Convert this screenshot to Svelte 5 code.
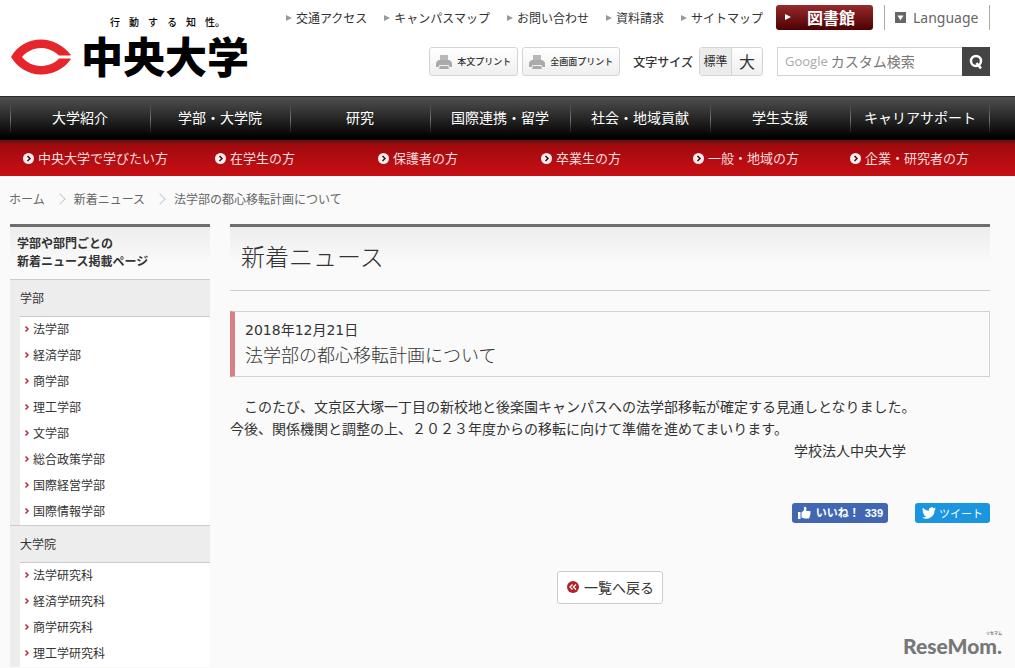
<script>
	const utilityLinks = [
		"交通アクセス",
		"キャンパスマップ",
		"お問い合わせ",
		"資料請求",
		"サイトマップ",
	];
	const mainNav = [
		"大学紹介",
		"学部・大学院",
		"研究",
		"国際連携・留学",
		"社会・地域貢献",
		"学生支援",
		"キャリアサポート",
	];
	const visitorNav = [
		"中央大学で学びたい方",
		"在学生の方",
		"保護者の方",
		"卒業生の方",
		"一般・地域の方",
		"企業・研究者の方",
	];
	const sideSections = [
		{
			title: "学部",
			items: [
				"法学部",
				"経済学部",
				"商学部",
				"理工学部",
				"文学部",
				"総合政策学部",
				"国際経営学部",
				"国際情報学部",
			],
		},
		{
			title: "大学院",
			items: ["法学研究科", "経済学研究科", "商学研究科", "理工学研究科"],
		},
	];
	let query = $state("");
	let size = $state("標準");
</script>

{#snippet printer()}
	<svg class="printer" viewBox="0 0 16 16" width="16" height="16" aria-hidden="true">
		<path d="M4 1h8v5H4z" fill="#b8b8b8" />
		<path d="M3 6h10q3 1 3 4v3H0v-3q0-3 3-4z" fill="#aaa" />
		<path d="M3.500 11.500h9l1 4h-11z" fill="#aaa" stroke="#f2f2f2" />
	</svg>
{/snippet}

<div class="page">
	<header>
		<a class="brand" href="#top">
			<svg class="mark" viewBox="0 0 60 36" width="60" height="36" aria-hidden="true">
				<path
					fill="#e5262d"
					d="M60 16C52 6 41 .5 30 .5 17 .5 6 7.500 0 18c6 10 17 17.500 30 17.500 12 0 23-5.500 30-15.500l-1-.5H48C43 25 36 27 30 27c-8 0-15-4-19-9 4-5 11-9 19-9 6 0 13 2.500 18 7.500h11z"
				/>
			</svg>
			<span class="brand-text">
				<span class="tagline">
					{#each ["行", "動", "す", "る", "知", "性。"] as c}<span>{c}</span>{/each}
				</span>
				<span class="brand-name">中央大学</span>
			</span>
		</a>
		<div class="tools">
			<div class="row">
				<ul class="utility">
					{#each utilityLinks as link}
						<li><a href="#link">{link}</a></li>
					{/each}
				</ul>
				<a class="library" href="#library">図書館</a>
				<button class="language" type="button">
					<svg viewBox="0 0 11 11" width="11" height="11" aria-hidden="true">
						<path d="M0 0h11v11H0z" fill="#666" />
						<path d="M2.500 3.500h6L5.500 8.500z" fill="#fff" />
					</svg>
					Language
				</button>
			</div>
			<div class="row second">
				<button class="print" type="button">{@render printer()}本文プリント</button>
				<button class="print" type="button">{@render printer()}全画面プリント</button>
				<span class="size-label">文字サイズ</span>
				<div class="sizes">
					<button type="button" class:active={size === "標準"} onclick={() => (size = "標準")}>標準</button>
					<button type="button" class="big" class:active={size === "大"} onclick={() => (size = "大")}>大</button>
				</div>
				<form class="search">
					<label for="q">Google</label>
					<input id="q" type="text" placeholder="カスタム検索" bind:value={query} />
					<button type="button" aria-label="検索">
						<svg viewBox="0 0 16 16" width="16" height="16" aria-hidden="true">
							<circle cx="8" cy="7" r="5" fill="none" stroke="#fff" stroke-width="2.500" />
							<path d="M8.500 9l4.500 5.500" stroke="#fff" stroke-width="2.500" />
						</svg>
					</button>
				</form>
			</div>
		</div>
	</header>

	<nav class="main-nav">
		<ul>
			{#each mainNav as item}
				<li><a href="#nav">{item}</a></li>
			{/each}
		</ul>
	</nav>
	<nav class="visitor-nav">
		<ul>
			{#each visitorNav as item}
				<li>
					<a href="#visitor">
						<svg viewBox="0 0 11 11" width="11" height="11" aria-hidden="true">
							<circle cx="5.500" cy="5.500" r="5.500" fill="#ffecec" />
							<path d="M4.500 3l2.500 2.500L4.500 8" fill="none" stroke="#4a0c0e" stroke-width="1.500" />
						</svg>
						{item}
					</a>
				</li>
			{/each}
		</ul>
	</nav>

	<ol class="crumbs">
		<li><a href="#home">ホーム</a></li>
		<li><a href="#news">新着ニュース</a></li>
		<li>法学部の都心移転計画について</li>
	</ol>

	<div class="columns">
		<aside>
			<h2>学部や部門ごとの<br />新着ニュース掲載ページ</h2>
			{#each sideSections as section}
				<section>
					<h3>{section.title}</h3>
					<ul>
						{#each section.items as item}
							<li>
								<a href="#dept">
									<svg viewBox="0 0 4 6" width="4" height="6" aria-hidden="true">
										<path d="M.5.5L3 3 .5 5.500" fill="none" stroke="#b0283a" stroke-width="1.500" />
									</svg>
									{item}
								</a>
							</li>
						{/each}
					</ul>
				</section>
			{/each}
		</aside>

		<main>
			<h1>新着ニュース</h1>
			<div class="article-head">
				<time datetime="2018-12-21">2018年12月21日</time>
				<h2>法学部の都心移転計画について</h2>
			</div>
			<p>
				&#x3000;このたび、文京区大塚一丁目の新校地と後楽園キャンパスへの法学部移転が確定する見通しとなりました。<br
				/>今後、関係機関と調整の上、２０２３年度からの移転に向けて準備を進めてまいります。
			</p>
			<p class="sign">学校法人中央大学</p>
			<div class="share">
				<button class="like" type="button">
					<svg viewBox="0 0 14 14" width="14" height="14" aria-hidden="true">
						<path
							fill="#fff"
							d="M1 6h2.500v7H1zM4.500 6.500L7 4V1.500C7 .5 9.500.5 9.500 2.500L9 5h3.500c1 0 1.500 1 .8 1.800.5.600.4 1.400-.3 1.800.4.700.1 1.300-.4 1.700.2.900-.3 2.200-1.600 2.200H7.500l-3-1z"
						/>
					</svg>
					<span>いいね！</span>
					<span>339</span>
				</button>
				<button class="tweet" type="button">
					<svg viewBox="0 0 24 24" width="14" height="14" aria-hidden="true">
						<path
							fill="#fff"
							d="M24 4.600a10 10 0 0 1-2.800.8 5 5 0 0 0 2.100-2.700 10 10 0 0 1-3.100 1.200 4.900 4.900 0 0 0-8.400 4.500A14 14 0 0 1 1.700 3.200a4.900 4.900 0 0 0 1.500 6.500 4.900 4.900 0 0 1-2.200-.6 4.900 4.900 0 0 0 3.900 4.900 5 5 0 0 1-2.200.1 4.900 4.900 0 0 0 4.600 3.400A10 10 0 0 1 0 19.500a14 14 0 0 0 21.500-12.400A10 10 0 0 0 24 4.600z"
						/>
					</svg>
					ツイート
				</button>
			</div>
			<a class="back" href="#list">
				<svg viewBox="0 0 12 12" width="12" height="12" aria-hidden="true">
					<circle cx="6" cy="6" r="6" fill="#b3202a" />
					<path d="M5.500 3.500L3 6l2.500 2.500M9 3.500L6.500 6 9 8.500" fill="none" stroke="#fff" stroke-width="1.300" />
				</svg>
				一覧へ戻る
			</a>
		</main>
	</div>

	<div class="watermark">
		<small>リセマム</small>
		<span>ReseMom.</span>
	</div>
</div>

<style>
	:global(body) {
		background: #fafafa;
	}

	.page {
		position: relative;
		min-height: 100vh;
		color: #333;
		font: 14px/22px "Noto Sans CJK JP", sans-serif;
	}

	ul,
	ol,
	h1,
	h2,
	h3,
	p {
		margin: 0;
		padding: 0;
		list-style: none;
		font-weight: 400;
	}

	a {
		color: inherit;
		text-decoration: none;
	}

	button,
	input {
		margin: 0;
		padding: 0;
		border: 0;
		background: none;
		color: inherit;
		font-family: inherit;
	}

	svg {
		flex: none;
	}

	header {
		display: flex;
		justify-content: space-between;
		box-sizing: border-box;
		height: 96px;
		padding: 5px 25px 0 11px;
		background: #fff;
	}

	.brand {
		display: flex;
		gap: 10px;
		color: #000;
	}

	.mark {
		margin-top: 34px;
	}

	.brand-text {
		display: flex;
		flex-direction: column;
		padding-top: 9px;
	}

	.tagline {
		display: flex;
		gap: 9px;
		padding-left: 29px;
		font-size: 10px;
		font-weight: 500;
		line-height: 16px;
	}

	.brand-name {
		font-size: 42px;
		font-weight: 900;
		line-height: 49px;
	}

	.row {
		display: flex;
		align-items: center;
		justify-content: flex-end;
		height: 25px;
	}

	.row.second {
		height: 29px;
		margin-top: 17px;
	}

	.utility {
		display: flex;
		gap: 17px;
		margin-right: 13px;
		font-size: 12px;
	}

	.utility a {
		display: flex;
		align-items: center;
		gap: 4px;
		white-space: nowrap;
	}

	.utility a::before,
	.library::before {
		content: "";
		border-left: 6px solid #999;
		border-top: 3px solid transparent;
		border-bottom: 3px solid transparent;
	}

	.library {
		display: flex;
		align-items: center;
		gap: 16px;
		box-sizing: border-box;
		width: 97px;
		height: 25px;
		padding: 0 0 2px 9px;
		border-radius: 3px;
		background: linear-gradient(#982a2c, #4c0002);
		color: #fff;
		font-size: 16px;
		font-weight: 700;
	}

	.library::before {
		border-left-color: #fff;
	}

	.language {
		display: flex;
		align-items: center;
		gap: 7px;
		box-sizing: border-box;
		width: 106px;
		height: 25px;
		margin-left: 11px;
		padding-left: 10px;
		border: solid #aaa;
		border-width: 0 1px;
		color: #666;
		font: 14px/25px "Noto Sans", sans-serif;
	}

	.print {
		display: flex;
		align-items: center;
		justify-content: center;
		gap: 5px;
		box-sizing: border-box;
		height: 29px;
		margin-right: 4px;
		padding: 0 6px;
		border: 1px solid #d4d4d4;
		border-radius: 3px;
		background: linear-gradient(#fff, #efefef);
		font-size: 9px;
		font-weight: 500;
	}

	.size-label {
		margin: 0 6px 0 9px;
		font-size: 12px;
		font-weight: 500;
	}

	.sizes {
		display: flex;
		box-sizing: border-box;
		height: 29px;
		margin-right: 14px;
		border: 1px solid #d4d4d4;
		border-radius: 3px;
		background: linear-gradient(#fff, #efefef);
	}

	.sizes button {
		width: 31px;
		padding-bottom: 2px;
		font-size: 12px;
	}

	.sizes .active {
		background: #ececec;
	}

	.sizes .big {
		border-left: 1px solid #d4d4d4;
		font-size: 16px;
	}

	.search {
		display: flex;
		align-items: center;
		box-sizing: border-box;
		width: 213px;
		height: 29px;
		border: 1px solid #d4d4d4;
	}

	.search label {
		padding: 0 3px 0 7px;
		color: #aaa;
		font: 13px/27px "Open Sans", sans-serif;
	}

	.search input {
		flex: 1;
		min-width: 0;
		padding-bottom: 2px;
		font-size: 14px;
	}

	.search input::placeholder {
		color: #777;
		opacity: 1;
	}

	.search button {
		display: grid;
		place-items: center;
		width: 28px;
		height: 29px;
		margin-right: -1px;
		background: #444;
	}

	.main-nav {
		box-sizing: border-box;
		height: 44px;
		padding: 0 25px 0 10px;
		border-top: 1px solid #2c2c2c;
		background: linear-gradient(#505050, #000 95%);
	}

	.main-nav ul {
		display: grid;
		grid-template-columns: repeat(7, 1fr);
	}

	.main-nav li {
		background: linear-gradient(transparent 15%, #777 50%, transparent 85%) left / 1px 100% no-repeat;
	}

	.main-nav li:last-child {
		background:
			linear-gradient(transparent 15%, #777 50%, transparent 85%) left / 1px 100% no-repeat,
			linear-gradient(transparent 15%, #777 50%, transparent 85%) right / 1px 100% no-repeat;
	}

	.main-nav a {
		display: block;
		padding-bottom: 2px;
		color: #fff;
		line-height: 41px;
		text-align: center;
	}

	.visitor-nav {
		height: 36px;
		padding: 0 25px 0 23px;
		background: linear-gradient(#5c1012, #a00a0d 5px, #c81016);
	}

	.visitor-nav ul {
		display: grid;
		grid-template-columns: 192fr 163fr 163fr 152fr 157fr 140fr;
	}

	.visitor-nav a {
		display: flex;
		align-items: center;
		gap: 4px;
		color: #ffdede;
		font-size: 13px;
		line-height: 36px;
		white-space: nowrap;
	}

	.crumbs {
		display: flex;
		padding: 12px 9px 14px;
		color: #666;
		font-size: 12px;
	}

	.crumbs li {
		display: flex;
		align-items: center;
	}

	.crumbs li + li::before {
		content: "";
		width: 7px;
		height: 7px;
		margin: 0 10px 0 11px;
		border: solid #ccc;
		border-width: 1px 1px 0 0;
		transform: rotate(45deg);
	}

	.columns {
		display: grid;
		grid-template-columns: 200px 1fr;
		gap: 20px;
		padding: 0 25px 0 10px;
	}

	aside h2,
	h1 {
		border-top: 3px solid #6e6e6e;
		background: linear-gradient(#ededed, #fafafa 36px);
	}

	aside h2 {
		padding: 7px 7px 9px;
		font-size: 12px;
		font-weight: 700;
		line-height: 18px;
	}

	aside section {
		border-top: 1px solid #ccc;
		padding-left: 10px;
		background: #ededed;
	}

	aside h3 {
		border-bottom: 1px solid #ccc;
		font-size: 12px;
		line-height: 36px;
	}

	aside ul {
		background: #fff;
	}

	aside li a {
		display: flex;
		align-items: center;
		gap: 4px;
		padding: 0 0 2px 5px;
		font-size: 12px;
		line-height: 24px;
	}

	h1 {
		padding: 0 11px 6px;
		border-bottom: 1px solid #ccc;
		font-size: 24px;
		font-weight: 300;
		line-height: 57px;
	}

	.article-head {
		margin: 20px 0 18px;
		padding: 6px 10px 10px;
		border: 1px solid #d2d2d2;
		border-left: 5px solid #d97f86;
	}

	time {
		display: block;
		font-family: "DejaVu Sans", "Noto Sans CJK JP", sans-serif;
		line-height: 24px;
	}

	.article-head h2 {
		font-size: 18px;
		font-weight: 300;
		line-height: 24px;
	}

	.sign {
		padding-right: 84px;
		text-align: right;
	}

	.share {
		display: flex;
		justify-content: flex-end;
		gap: 27px;
		margin-top: 42px;
	}

	.share button {
		display: flex;
		align-items: center;
		height: 20px;
		border-radius: 3px;
		color: #fff;
	}

	.like {
		gap: 5px;
		padding: 0 5px;
		background: #4267b2;
		font: 700 11px/20px "Liberation Sans", "Noto Sans CJK JP", sans-serif;
	}

	.tweet {
		gap: 3px;
		padding: 0 7px;
		background: #1b95e0;
		font-size: 11px;
	}

	.back {
		display: flex;
		align-items: center;
		gap: 5px;
		box-sizing: border-box;
		width: fit-content;
		height: 33px;
		margin: 48px auto 0;
		padding: 0 8px 2px 9px;
		border: 1px solid #ccc;
		border-radius: 3px;
		background: #fff;
	}

	.watermark {
		position: absolute;
		right: 13px;
		bottom: 11px;
		display: flex;
		flex-direction: column;
		color: #777;
	}

	.watermark small {
		align-self: flex-end;
		font-size: 4px;
		font-weight: 700;
		line-height: 4px;
	}

	.watermark span {
		font: 900 21px/22px Lato, sans-serif;
	}
</style>
